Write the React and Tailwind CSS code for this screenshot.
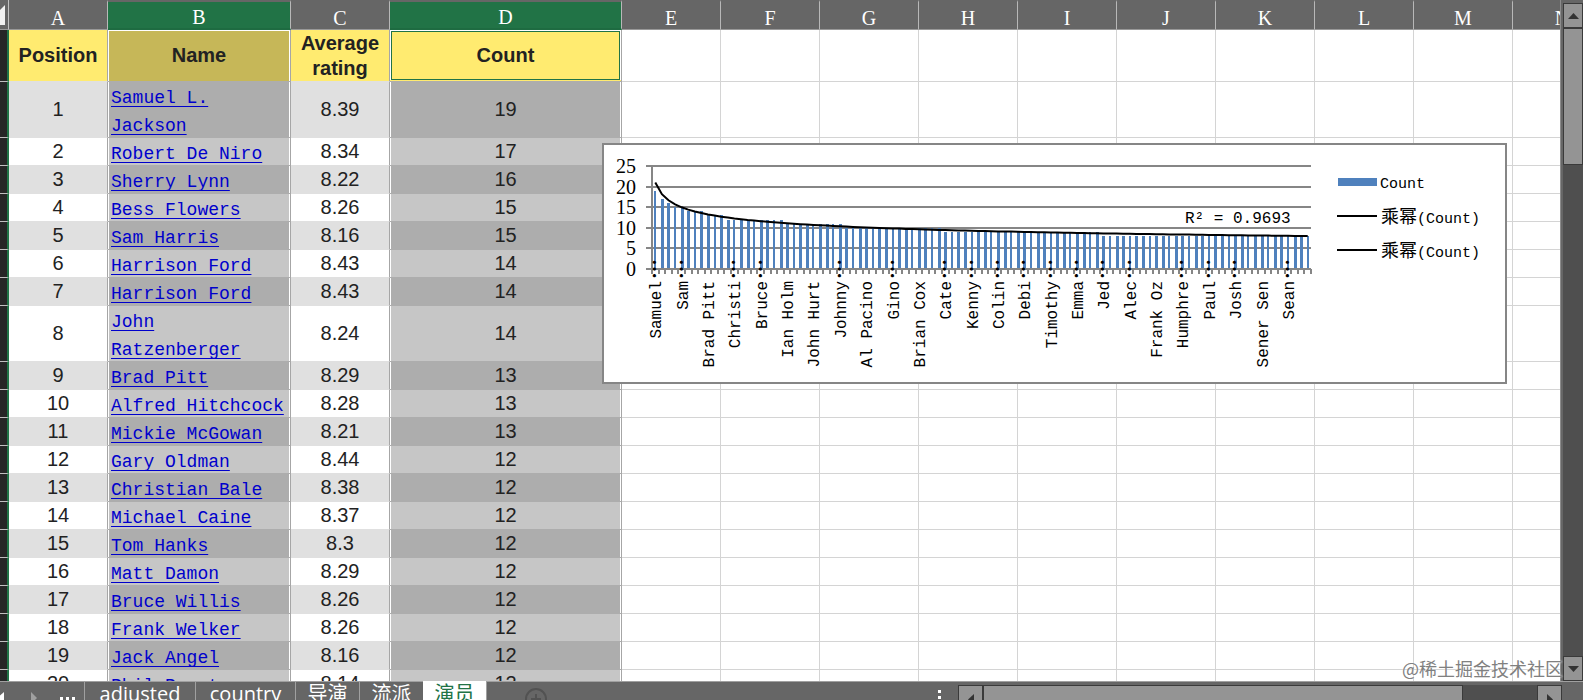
import clsx from "clsx";

const columns = [
    { letter: "A", width: "w-[99px]" },
    { letter: "B", width: "w-[183px]", selected: true },
    { letter: "C", width: "w-[99px]" },
    { letter: "D", width: "w-[232px]", selected: true },
    ..."EFGHIJKLMN".split("").map((letter) => ({ letter, width: "w-[99px]" })),
];
const emptyColumns = columns.slice(4);

const actors = [
    ["Samuel L.\nJackson", "8.39", 19],
    ["Robert De Niro", "8.34", 17],
    ["Sherry Lynn", "8.22", 16],
    ["Bess Flowers", "8.26", 15],
    ["Sam Harris", "8.16", 15],
    ["Harrison Ford", "8.43", 14],
    ["Harrison Ford", "8.43", 14],
    ["John\nRatzenberger", "8.24", 14],
    ["Brad Pitt", "8.29", 13],
    ["Alfred Hitchcock", "8.28", 13],
    ["Mickie McGowan", "8.21", 13],
    ["Gary Oldman", "8.44", 12],
    ["Christian Bale", "8.38", 12],
    ["Michael Caine", "8.37", 12],
    ["Tom Hanks", "8.3", 12],
    ["Matt Damon", "8.29", 12],
    ["Bruce Willis", "8.26", 12],
    ["Frank Welker", "8.26", 12],
    ["Jack Angel", "8.16", 12],
    ["Phil Proctor", "8.14", 12],
];

// [count, number of actors with that count]
const countRuns = [[19, 1], [17, 1], [16, 1], [15, 2], [14, 3], [13, 3], [12, 9], [11, 9], [10, 15], [9, 24], [8, 32]];
const counts = countRuns.flatMap(([value, times]) => Array(times).fill(value));

// every fourth actor gets a label, long ones are cut
const labels = [
    "Samuel…", "Sam…", "Brad Pitt", "Christi…", "Bruce…", "Ian Holm", "John Hurt", "Johnny…", "Al Pacino",
    "Gino…", "Brian Cox", "Cate…", "Kenny…", "Colin…", "Debi…", "Timothy…", "Emma…", "Jed…", "Alec…",
    "Frank Oz", "Humphre…", "Paul…", "Josh…", "Sener Sen", "Sean…",
];

const PLOT_LEFT = 48;
const PLOT_RIGHT = 707;
const BASE = 124;
const STEP = (PLOT_RIGHT - PLOT_LEFT) / 100;
const yOf = (value) => BASE - value * 4.12;
const xOf = (index) => PLOT_LEFT + (index + 0.5) * STEP;

const trend = counts
    .map((_, i) => `${i === 0 ? "M" : "L"}${xOf(i).toFixed(1)} ${yOf(21 * Math.pow(i + 1, -0.2096)).toFixed(1)}`)
    .join(" ");

const SERIF = "font-['Liberation_Serif','Noto_Sans_CJK_SC',serif]";
const MONO = "font-['Liberation_Mono','Noto_Sans_CJK_SC',monospace]";
const CJK = "font-['Noto_Sans_CJK_SC',sans-serif]";

const Chart = () => (
    <div className="absolute left-[602px] top-[143px] w-[905px] border-2 border-[#868686] bg-white">
        <svg viewBox="0 0 901 237" className="block w-full">
            {[25, 20, 15, 10, 5, 0].map((value) => (
                <g key={value}>
                    <rect x={42} y={Math.round(yOf(value)) - 1} width={PLOT_RIGHT - 42} height={2} fill="#868686" />
                    <text x={32} y={Math.round(yOf(value)) + 7} textAnchor="end" className={clsx(SERIF, "text-[20px]")}>
                        {value}
                    </text>
                </g>
            ))}
            <rect x={PLOT_LEFT - 1} y={20} width={2} height={BASE - 20} fill="#868686" />
            {counts.map((value, i) => (
                <rect
                    key={i}
                    x={Math.round(xOf(i)) - 1}
                    y={Math.round(yOf(value))}
                    width={i % 3 === 0 ? 2 : 3}
                    height={BASE - 1 - Math.round(yOf(value))}
                    fill="#4f81bd"
                />
            ))}
            {Array.from({ length: 101 }, (_, i) => (
                <rect key={i} x={Math.round(PLOT_LEFT + i * STEP) - 1} y={BASE} width={2} height={5} fill="#868686" />
            ))}
            <path d={trend} fill="none" stroke="#000" strokeWidth={2} />
            {labels.map((label, i) => {
                const x = Math.round(xOf(i * 4));
                return (
                    <g key={label}>
                        <text
                            transform={`translate(${x + 6} 136) rotate(-90)`}
                            textAnchor="end"
                            className={clsx(MONO, "text-[16px]")}
                        >
                            {label.replace("…", "")}
                        </text>
                        {label.endsWith("…") && (
                            <text
                                transform={`translate(${x + 7} ${BASE}) rotate(-90)`}
                                textAnchor="middle"
                                className={clsx(CJK, "text-[20px] font-bold")}
                            >
                                …
                            </text>
                        )}
                    </g>
                );
            })}
            <text x={581} y={78} className={clsx(MONO, "text-[16px]")}>
                R² = 0.9693
            </text>

            {/* Legend */}
            <rect x={734} y={33} width={39} height={8} fill="#4f81bd" />
            <text x={776} y={43} className={clsx(MONO, "text-[15px]")}>Count</text>
            {[71, 105].map((y) => (
                <g key={y}>
                    <rect x={733} y={y - 1} width={40} height={2} fill="#000" />
                    <text x={777} y={y + 7} className={clsx(MONO, "text-[15px]")}>
                        <tspan className="text-[18px]">乘幂</tspan>(Count)
                    </text>
                </g>
            ))}
        </svg>
    </div>
);

const Sheet = () => (
    <div className="relative min-w-0 flex-1 overflow-hidden bg-white">
        <table className="w-max table-fixed border-separate border-spacing-0">
            <thead>
                <tr className="h-[30px]">
                    <th className="w-[9px] border-b border-r border-b-[#999999] border-r-[#c0c0c0] bg-[#666666] p-0">
                        <svg width="5" height="20" viewBox="0 0 5 20" className="block">
                            <path d="M5 0V20H0V5Z" fill="#f2f2f2" />
                        </svg>
                    </th>
                    {columns.map(({ letter, width, selected }) => (
                        <th
                            key={letter}
                            scope="col"
                            className={clsx(
                                SERIF,
                                width,
                                "border-r border-t-2 border-r-[#b8b8b8] border-t-[#666666] px-0 pb-0 pt-1 text-[20px] font-normal leading-[22px] text-white",
                                selected ? "border-b-2 border-b-[#1e6b41] bg-[#217346]" : "border-b border-b-[#999999] bg-[#666666]"
                            )}
                        >
                            {letter}
                        </th>
                    ))}
                </tr>
            </thead>
            <tbody className="font-['Liberation_Sans',Arial,sans-serif] text-[20px] text-[#222222]">
                <tr className="h-[52px] leading-[25px]">
                    <td className="border-b border-r-2 border-b-[#c0c0c0] border-r-[#217346] bg-[#262626] p-0" />
                    <th className="border-b border-r border-b-[#e0e0e0] border-r-[#a6a6a6] bg-[#ffeb70] p-0">Position</th>
                    <th className="border-b border-r border-b-[#adadad] border-r-[#a6a6a6] bg-[#c6b758] p-0 shadow-[inset_1px_0_0_white,inset_-1px_0_0_white,inset_0_1px_0_white]">
                        Name
                    </th>
                    <th className="border-b border-r border-b-[#e0e0e0] border-r-[#a6a6a6] bg-[#ffeb70] p-0">
                        Average
                        <br />
                        rating
                    </th>
                    <th className="border-b border-r border-b-[#adadad] border-r-[#a6a6a6] bg-[#ffeb70] p-0 shadow-[inset_0_-1px_0_#ffeb70,inset_0_0_0_1px_white,inset_0_0_0_2px_#217346]">
                        Count
                    </th>
                    {emptyColumns.map(({ letter }) => (
                        <td key={letter} className="border-b border-r border-[#d4d4d4]" />
                    ))}
                </tr>
                {actors.map(([name, rating, count], i) => {
                    const tall = name.includes("\n");
                    const plain = i % 2 === 0 ? "bg-[#e0e0e0]" : "bg-white";
                    const picked = i % 2 === 0 ? "bg-[#adadad]" : "bg-[#c6c6c6]";
                    const edge = "border-b border-r border-r-[#a6a6a6] p-0 text-center leading-[27px]";
                    const inset = "shadow-[inset_1px_0_0_white,inset_-1px_0_0_white]";
                    return (
                        <tr key={i} className={tall ? "h-[56px]" : "h-[28px]"}>
                            <td className="border-b border-r-2 border-b-[#c0c0c0] border-r-[#217346] bg-[#262626] p-0" />
                            <td className={clsx(edge, plain, "border-b-[#e0e0e0]")}>{i + 1}</td>
                            <td className={clsx(edge, picked, inset, "border-b-[#adadad]")}>
                                <div className={clsx(MONO, "pl-[3px] pt-[2px] text-left text-[18px] leading-[28px]", tall ? "h-[55px]" : "h-[27px]")}>
                                    <a
                                        href="#"
                                        className="whitespace-pre text-[#0000cc] underline decoration-1 underline-offset-[3px] [text-decoration-skip-ink:none]"
                                    >
                                        {name}
                                    </a>
                                </div>
                            </td>
                            <td className={clsx(edge, plain, "border-b-[#e0e0e0]")}>{rating}</td>
                            <td className={clsx(edge, picked, inset, "border-b-[#adadad]")}>{count}</td>
                            {emptyColumns.map(({ letter }) => (
                                <td key={letter} className="border-b border-r border-[#d4d4d4]" />
                            ))}
                        </tr>
                    );
                })}
            </tbody>
        </table>
        <Chart />
    </div>
);

const VerticalScroll = () => (
    <div className="flex w-[23px] shrink-0 flex-col border-l border-[#8c8c8c] bg-[#666666] pl-[2px] pt-[3px]">
        <button aria-label="Scroll up" className="flex h-[25px] items-center justify-center border border-[#3a3a3a] bg-[#949494]">
            <svg width="11" height="6" viewBox="0 0 11 6"><path d="M0 6L5.5 0L11 6Z" fill="#333" /></svg>
        </button>
        <div className="flex-1 bg-[#4f4f4f]">
            <div className="h-[137px] border border-[#3a3a3a] bg-[#949494]" />
        </div>
        <button aria-label="Scroll down" className="flex h-[25px] items-center justify-center border border-[#3a3a3a] bg-[#949494]">
            <svg width="11" height="6" viewBox="0 0 11 6"><path d="M0 0L5.5 6L11 0Z" fill="#333" /></svg>
        </button>
    </div>
);

const tabs = [
    ["adjusted", "w-[111px]"],
    ["country", "w-[100px]"],
    ["导演", "w-[64px]"],
    ["流派", "w-[64px]"],
];

const BottomBar = () => (
    <div className="h-[19px] shrink-0 overflow-hidden bg-[#666666]">
        <div className="flex h-[32px] font-['Open_Sans','Noto_Sans_CJK_SC',sans-serif] text-[20px] leading-[24px] text-white">
            <div className="flex w-[84px] shrink-0 border-t border-[#a0a0a0]">
                <svg width="84" height="31" viewBox="0 0 84 31">
                    <path d="M4 10V22L-3 16Z" fill="#fff" />
                    <path d="M31 10V22L37 16Z" fill="#a0a0a0" />
                    <path d="M60 15h3v3h-3zM66 15h3v3h-3zM72 15h3v3h-3z" fill="#fff" />
                </svg>
            </div>
            {tabs.map(([name, width]) => (
                <button key={name} className={clsx(width, "flex shrink-0 items-start justify-center border-l border-t border-[#a0a0a0]")}>
                    {name}
                </button>
            ))}
            <button className="flex w-[63px] shrink-0 items-start justify-center bg-white pt-px text-[#217346]">演员</button>
            <div className="flex flex-1 justify-between border-l border-t border-[#a0a0a0]">
                <button aria-label="New sheet" className="ml-[37px] mt-[5px] self-start">
                    <svg width="24" height="24" viewBox="0 0 24 24" fill="none" stroke="#525252" strokeWidth="2" className="block">
                        <circle cx="12" cy="12" r="10" />
                        <path d="M12 7v10M7 12h10" />
                    </svg>
                </button>
                <svg width="4" height="24" viewBox="0 0 4 24" className="mr-[16px]">
                    <path d="M0 8h3v3h-3zM0 14h3v3h-3zM0 20h3v3h-3z" fill="#fff" />
                </svg>
            </div>
            <div className="flex w-[625px] shrink-0 border-t border-[#a0a0a0] pr-[21px] pt-[3px]">
                <button aria-label="Scroll left" className="flex w-[25px] items-center justify-center border border-[#3a3a3a] bg-[#949494]">
                    <svg width="6" height="11" viewBox="0 0 6 11"><path d="M6 0V11L0 5.5Z" fill="#333" /></svg>
                </button>
                <div className="flex-1 bg-[#4f4f4f]">
                    <div className="h-full w-[480px] border border-[#3a3a3a] bg-[#949494]" />
                </div>
                <button aria-label="Scroll right" className="flex w-[25px] items-center justify-center border border-[#3a3a3a] bg-[#949494]">
                    <svg width="6" height="11" viewBox="0 0 6 11"><path d="M0 0V11L6 5.5Z" fill="#333" /></svg>
                </button>
            </div>
        </div>
    </div>
);

const App = () => (
    <div className="relative flex h-screen flex-col overflow-hidden bg-[#666666]">
        <div className="flex min-h-0 flex-1">
            <Sheet />
            <VerticalScroll />
        </div>
        <BottomBar />
        <span className={clsx(CJK, "absolute bottom-[19px] right-[20px] text-[18px] leading-[26px] text-[#808080] [text-shadow:0_0_2px_white]")}>
            @稀土掘金技术社区
        </span>
    </div>
);

export default App;
